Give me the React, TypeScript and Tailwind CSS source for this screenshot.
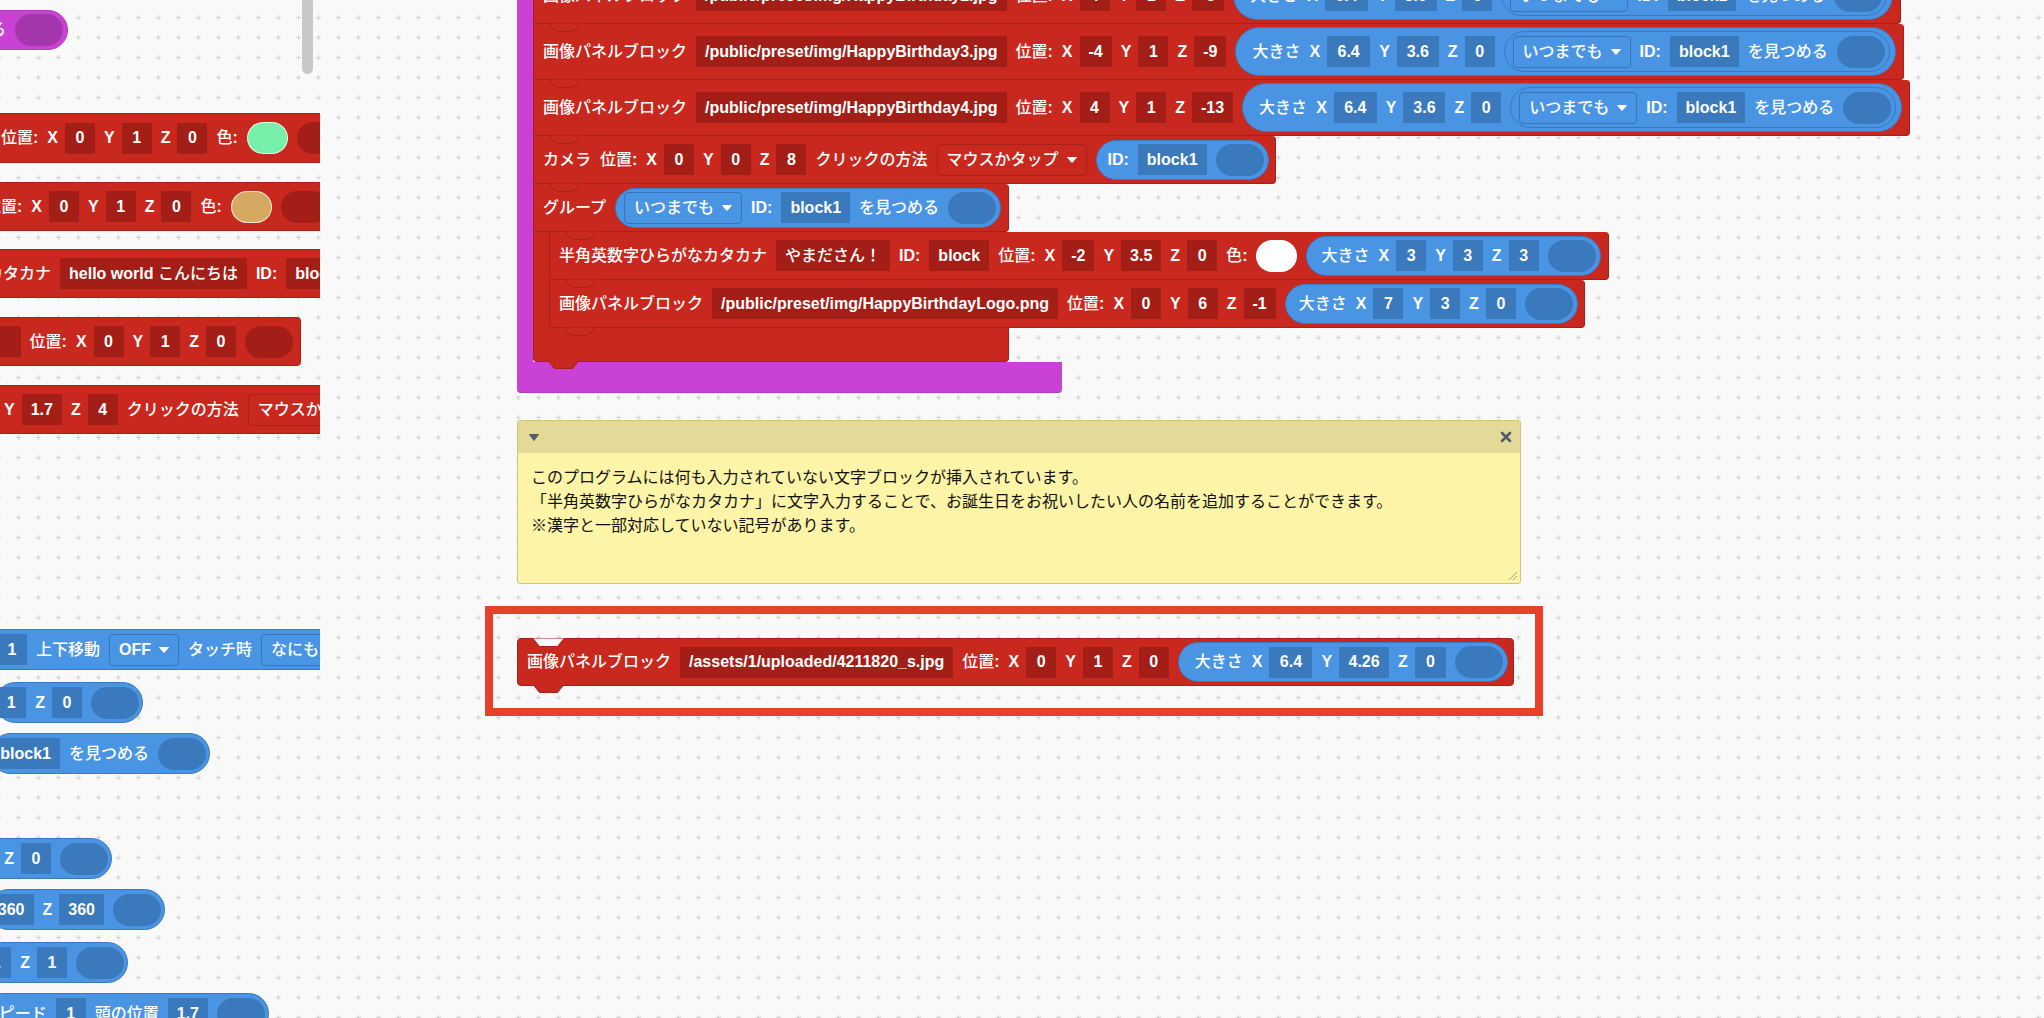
import React from 'react';

const CJK = /([\u3000-\u30ff\u3400-\u9fff\uff00-\uffef※]+)/;

function Txt({ s }: { s: string }) {
  return (
    <span className="whitespace-pre">
      {s
        .split(CJK)
        .filter(Boolean)
        .map((p, i) =>
          CJK.test(p) ? (
            <span key={i} className="font-medium">{p}</span>
          ) : (
            <span key={i} className="font-bold">{p}</span>
          )
        )}
    </span>
  );
}

type Tone = 'red' | 'blue' | 'purple';

function L({ s }: { s: string }) {
  const axis = s === 'X' || s === 'Y' || s === 'Z';
  return (
    <span className={`shrink-0 whitespace-nowrap text-white ${axis ? 'mr-[-2px]' : ''}`}>
      <Txt s={s} />
    </span>
  );
}

function F({ s, c = 'red', w = '' }: { s: string; c?: Tone; w?: string }) {
  return (
    <span
      className={`flex h-[31px] min-w-[30px] shrink-0 items-center justify-center whitespace-nowrap px-[9px] text-white ${
        c === 'red' ? 'bg-[#a21e16]' : 'bg-[#3b79bd]'
      } ${w}`}
    >
      <Txt s={s} />
    </span>
  );
}

function Caret() {
  return (
    <svg width="10" height="6" viewBox="0 0 10 6" className="shrink-0">
      <path d="M0.5 0.5 H9.5 L5 5.5 Z" fill="white" stroke="white" strokeLinejoin="round" />
    </svg>
  );
}

function D({ s, c = 'red' }: { s: string; c?: Tone }) {
  return (
    <span
      className={`flex h-[32px] shrink-0 items-center gap-[8px] whitespace-nowrap rounded-[4px] border px-[9px] text-white ${
        c === 'red' ? 'border-[#a5221a]' : 'border-[#3a74b8]'
      }`}
    >
      <Txt s={s} />
      <Caret />
    </span>
  );
}

function O({ c = 'blue' }: { c?: Tone }) {
  const bg = c === 'blue' ? 'bg-[#3b79bd]' : c === 'red' ? 'bg-[#a21e16]' : 'bg-[#a537ad]';
  return <span className={`h-[32px] w-[48px] shrink-0 rounded-full ${bg}`} />;
}

function Sw({ cls }: { cls: string }) {
  return <span className={`h-[32px] w-[41px] shrink-0 rounded-full border border-white/80 ${cls}`} />;
}

function Pill({ children, className = '' }: { children: React.ReactNode; className?: string }) {
  return (
    <div className={`flex shrink-0 items-center gap-[9px] rounded-full border border-[#3a78c2] bg-[#4a95e3] ${className}`}>
      {children}
    </div>
  );
}

// top notch outline of a block that sits under another one
function Notch() {
  return (
    <svg className="absolute left-[15px] top-[-1px] z-10" width="31" height="10" viewBox="0 0 31 10">
      <path d="M0 0.5 L6.5 8.5 H24.5 L31 0.5" fill="#c8281e" stroke="#a5221a" />
    </svg>
  );
}

function Stmt({
  children,
  className = '',
  notch = true,
}: {
  children: React.ReactNode;
  className?: string;
  notch?: boolean;
}) {
  return (
    <div
      className={`relative flex shrink-0 items-center gap-[9px] rounded-r-[4px] border-x border-b border-[#a5221a] bg-[#c8281e] ${className}`}
    >
      {notch && <Notch />}
      {children}
    </div>
  );
}

function Row({ children, className = '' }: { children: React.ReactNode; className?: string }) {
  return (
    <div className={`flex shrink-0 items-center gap-[9px] border border-[#a5221a] bg-[#c8281e] ${className}`}>
      {children}
    </div>
  );
}

function HBRow({ file, x, y, z }: { file: string; x: string; y: string; z: string }) {
  return (
    <Stmt className="h-[56px] pl-[9px] pr-[7px]">
      <L s="画像パネルブロック" />
      <F s={file} />
      <L s="位置:" />
      <L s="X" />
      <F s={x} />
      <L s="Y" />
      <F s={y} />
      <L s="Z" />
      <F s={z} />
      <Pill className="h-[49px] pl-[16px] pr-[5px]">
        <L s="大きさ" />
        <L s="X" />
        <F c="blue" s="6.4" w="w-[43px]" />
        <L s="Y" />
        <F c="blue" s="3.6" w="w-[42px]" />
        <L s="Z" />
        <F c="blue" s="0" />
        <Pill className="h-[41px] border-[#3a74b8] pl-[8px] pr-[4px]">
          <D c="blue" s="いつまでも" />
          <L s="ID:" />
          <F c="blue" s="block1" />
          <L s="を見つめる" />
          <O />
        </Pill>
      </Pill>
    </Stmt>
  );
}

function Grid() {
  return (
    <svg className="absolute inset-0 h-full w-full">
      <defs>
        <pattern id="grid" width="20" height="20" x="16" y="15" patternUnits="userSpaceOnUse">
          <path d="M0 2.5 H5 M2.5 0 V5" stroke="#d2d2d2" strokeWidth="1" />
        </pattern>
      </defs>
      <rect width="100%" height="100%" fill="url(#grid)" />
    </svg>
  );
}

function Flyout() {
  return (
    <div className="absolute left-0 top-0 h-full w-[320px] overflow-hidden">
      <div className="absolute left-0 top-[10px] flex w-[68px] justify-end">
        <div className="flex h-[40px] shrink-0 items-center gap-[9px] rounded-r-full border border-[#b53bc0] bg-[#ca41d5] pr-[4px]">
          <L s="を見つめる" />
          <O c="purple" />
        </div>
      </div>

      <div className="absolute left-[-10px] top-[113px]">
        <Row className="h-[50px] pl-[10px]">
          <L s="位置:" />
          <L s="X" />
          <F s="0" />
          <L s="Y" />
          <F s="1" />
          <L s="Z" />
          <F s="0" />
          <L s="色:" />
          <Sw cls="bg-[#76f0a8]" />
          <O c="red" />
          <L s="大きさ" />
        </Row>
      </div>

      <div className="absolute left-[-26px] top-[182px]">
        <Row className="h-[49px] pl-[10px]">
          <L s="位置:" />
          <L s="X" />
          <F s="0" />
          <L s="Y" />
          <F s="1" />
          <L s="Z" />
          <F s="0" />
          <L s="色:" />
          <Sw cls="bg-[#d5aa60]" />
          <O c="red" />
          <L s="大きさ" />
        </Row>
      </div>

      <div className="absolute left-[-24px] top-[249px]">
        <Row className="h-[49px] pl-[10px]">
          <L s="カタカナ" />
          <F s="hello world こんにちは" />
          <L s="ID:" />
          <F s="block1" />
          <L s="位置:" />
        </Row>
      </div>

      <div className="absolute left-0 top-[317px] flex w-[301px] justify-end">
        <Row className="h-[49px] rounded-r-[4px] pr-[7px]">
          <span className="h-[31px] w-[80px] shrink-0 bg-[#a21e16]" />
          <L s="位置:" />
          <L s="X" />
          <F s="0" />
          <L s="Y" />
          <F s="1" />
          <L s="Z" />
          <F s="0" />
          <O c="red" />
        </Row>
      </div>

      <div className="absolute left-[-7px] top-[385px]">
        <Row className="h-[49px] pl-[10px]">
          <L s="Y" />
          <F s="1.7" />
          <L s="Z" />
          <F s="4" />
          <L s="クリックの方法" />
          <D s="マウスかタップ" />
        </Row>
      </div>

      <div className="absolute left-[-14px] top-[629px]">
        <div className="flex h-[41px] shrink-0 items-center gap-[9px] border border-[#3a78c2] bg-[#4a95e3] pl-[10px]">
          <F c="blue" s="1" />
          <L s="上下移動" />
          <D c="blue" s="OFF" />
          <L s="タッチ時" />
          <D c="blue" s="なにもしない" />
        </div>
      </div>

      <div className="absolute left-0 top-[682px] flex w-[143px] justify-end">
        <Pill className="h-[41px] pr-[3px]">
          <F c="blue" s="1" />
          <L s="Z" />
          <F c="blue" s="0" />
          <O />
        </Pill>
      </div>

      <div className="absolute left-0 top-[733px] flex w-[210px] justify-end">
        <Pill className="h-[41px] pr-[3px]">
          <F c="blue" s="block1" />
          <L s="を見つめる" />
          <O />
        </Pill>
      </div>

      <div className="absolute left-0 top-[838px] flex w-[112px] justify-end">
        <Pill className="h-[41px] pr-[3px]">
          <F c="blue" s="0" />
          <L s="Z" />
          <F c="blue" s="0" />
          <O />
        </Pill>
      </div>

      <div className="absolute left-0 top-[889px] flex w-[165px] justify-end">
        <Pill className="h-[41px] pr-[3px]">
          <F c="blue" s="360" />
          <L s="Z" />
          <F c="blue" s="360" />
          <O />
        </Pill>
      </div>

      <div className="absolute left-0 top-[942px] flex w-[128px] justify-end">
        <Pill className="h-[41px] pr-[3px]">
          <F c="blue" s="1" />
          <L s="Z" />
          <F c="blue" s="1" />
          <O />
        </Pill>
      </div>

      <div className="absolute left-0 top-[993px] flex w-[269px] justify-end">
        <Pill className="h-[41px] pr-[3px]">
          <L s="スピード" />
          <F c="blue" s="1" />
          <L s="頭の位置" />
          <F c="blue" s="1.7" />
          <O />
        </Pill>
      </div>

      <div className="absolute left-[302px] top-[-8px] h-[82px] w-[11px] rounded-full bg-[#c8c8c8]" />
    </div>
  );
}

function MainStack() {
  return (
    <div className="absolute left-[517px] top-[-32px] flex flex-col items-start">
      <div className="flex">
        <div className="w-[16px] shrink-0 bg-[#ca41d5]" />
        <div className="flex flex-col items-start">
          <HBRow file="/public/preset/img/HappyBirthday2.jpg" x="4" y="1" z="-5" />
          <HBRow file="/public/preset/img/HappyBirthday3.jpg" x="-4" y="1" z="-9" />
          <HBRow file="/public/preset/img/HappyBirthday4.jpg" x="4" y="1" z="-13" />
          <Stmt className="h-[48px] pl-[9px] pr-[6px]">
            <L s="カメラ" />
            <L s="位置:" />
            <L s="X" />
            <F s="0" />
            <L s="Y" />
            <F s="0" />
            <L s="Z" />
            <F s="8" />
            <L s="クリックの方法" />
            <D s="マウスかタップ" />
            <Pill className="h-[40px] pl-[11px] pr-[4px]">
              <L s="ID:" />
              <F c="blue" s="block1" />
              <O />
            </Pill>
          </Stmt>

          {/* group */}
          <div className="flex flex-col items-start">
            <Stmt className="h-[48px] w-[476px] pl-[9px]">
              <L s="グループ" />
              <Pill className="h-[40px] pl-[8px] pr-[4px]">
                <D c="blue" s="いつまでも" />
                <L s="ID:" />
                <F c="blue" s="block1" />
                <L s="を見つめる" />
                <O />
              </Pill>
            </Stmt>
            <div className="flex">
              <div className="w-[16px] shrink-0 border-l border-[#a5221a] bg-[#c8281e]" />
              <div className="flex flex-col items-start">
                <Stmt className="h-[48px] pl-[9px] pr-[7px]">
                  <L s="半角英数字ひらがなカタカナ" />
                  <F s="やまださん！" />
                  <L s="ID:" />
                  <F s="block" />
                  <L s="位置:" />
                  <L s="X" />
                  <F s="-2" />
                  <L s="Y" />
                  <F s="3.5" />
                  <L s="Z" />
                  <F s="0" />
                  <L s="色:" />
                  <Sw cls="bg-white" />
                  <Pill className="h-[40px] pl-[14px] pr-[4px]">
                    <L s="大きさ" />
                    <L s="X" />
                    <F c="blue" s="3" />
                    <L s="Y" />
                    <F c="blue" s="3" />
                    <L s="Z" />
                    <F c="blue" s="3" />
                    <O />
                  </Pill>
                </Stmt>
                <Stmt className="h-[48px] pl-[9px] pr-[6px]">
                  <L s="画像パネルブロック" />
                  <F s="/public/preset/img/HappyBirthdayLogo.png" />
                  <L s="位置:" />
                  <L s="X" />
                  <F s="0" />
                  <L s="Y" />
                  <F s="6" />
                  <L s="Z" />
                  <F s="-1" />
                  <Pill className="h-[40px] pl-[13px] pr-[4px]">
                    <L s="大きさ" />
                    <L s="X" />
                    <F c="blue" s="7" />
                    <L s="Y" />
                    <F c="blue" s="3" />
                    <L s="Z" />
                    <F c="blue" s="0" />
                    <O />
                  </Pill>
                </Stmt>
              </div>
            </div>
            <div className="relative h-[34px] w-[476px] rounded-b-[4px] border-x border-b border-[#a5221a] bg-[#c8281e]">
              <svg className="absolute left-[30px] top-[-1px]" width="31" height="10" viewBox="0 0 31 10">
                <path d="M0 0.5 L6.5 8.5 H24.5 L31 0.5" fill="#c8281e" stroke="#a5221a" />
              </svg>
              <svg className="absolute bottom-[-9px] left-[14px] z-10" width="31" height="10" viewBox="0 0 31 10">
                <path d="M0 0.5 L6.5 8.5 H24.5 L31 0.5" fill="#c8281e" stroke="#a5221a" />
              </svg>
            </div>
          </div>
        </div>
      </div>
      <div className="h-[31px] w-[545px] rounded-b-[4px] border-b border-[#b53bc0] bg-[#ca41d5]" />
    </div>
  );
}

function Comment() {
  return (
    <div className="absolute left-[517px] top-[420px] flex h-[164px] w-[1004px] flex-col overflow-hidden rounded-[3px] border border-[#cfc47b] bg-[#fcf4a6]">
      <div className="flex h-[32px] shrink-0 items-center justify-between bg-[#e2da96] pl-[11px] pr-[8px]">
        <svg width="10" height="7" viewBox="0 0 10 7">
          <path d="M0.5 0.5 H9.5 L5 6.5 Z" fill="#555b6e" stroke="#555b6e" strokeLinejoin="round" />
        </svg>
        <svg width="12" height="12" viewBox="0 0 12 12">
          <path d="M2 2 L10 10 M10 2 L2 10" stroke="#555b6e" strokeWidth="2.6" strokeLinecap="round" />
        </svg>
      </div>
      <div className="relative flex-1 px-[13px] pt-[13px] text-[16px] font-normal leading-[24px] text-[#111111]">
        <p>このプログラムには何も入力されていない文字ブロックが挿入されています。</p>
        <p>「半角英数字ひらがなカタカナ」に文字入力することで、お誕生日をお祝いしたい人の名前を追加することができます。</p>
        <p>※漢字と一部対応していない記号があります。</p>
        <svg className="absolute bottom-[2px] right-[2px]" width="12" height="12" viewBox="0 0 12 12">
          <path d="M11 3 L3 11 M11 7 L7 11" stroke="#a9a27a" strokeWidth="1" />
        </svg>
      </div>
    </div>
  );
}

function Highlight() {
  return (
    <div className="absolute left-[485px] top-[606px] h-[110px] w-[1058px] border-[8px] border-[#e8412b] pl-[24px] pt-[24px]">
      <div className="relative flex h-[48px] w-fit items-center gap-[9px] rounded-[4px] border border-[#a5221a] bg-[#c8281e] pl-[9px] pr-[5px]">
        <svg className="absolute left-[15px] top-[-1px]" width="31" height="10" viewBox="0 0 31 10">
          <path d="M0 0.5 L6.5 8.5 H24.5 L31 0.5" fill="#f9f9f9" stroke="#a5221a" />
        </svg>
        <svg className="absolute bottom-[-9px] left-[15px]" width="31" height="10" viewBox="0 0 31 10">
          <path d="M0 0.5 L6.5 8.5 H24.5 L31 0.5" fill="#c8281e" stroke="#a5221a" />
        </svg>
        <L s="画像パネルブロック" />
        <F s="/assets/1/uploaded/4211820_s.jpg" />
        <L s="位置:" />
        <L s="X" />
        <F s="0" />
        <L s="Y" />
        <F s="1" />
        <L s="Z" />
        <F s="0" />
        <Pill className="h-[40px] pl-[16px] pr-[4px]">
          <L s="大きさ" />
          <L s="X" />
          <F c="blue" s="6.4" w="w-[43px]" />
          <L s="Y" />
          <F c="blue" s="4.26" w="w-[50px]" />
          <L s="Z" />
          <F c="blue" s="0" w="w-[31px]" />
          <O />
        </Pill>
      </div>
    </div>
  );
}

export default function App() {
  return (
    <div className="relative h-[1018px] w-[2044px] overflow-hidden bg-[#f9f9f9] font-['Liberation_Sans','Noto_Sans_CJK_JP',sans-serif] text-[16px]">
      <Grid />
      <Flyout />
      <MainStack />
      <Comment />
      <Highlight />
    </div>
  );
}
